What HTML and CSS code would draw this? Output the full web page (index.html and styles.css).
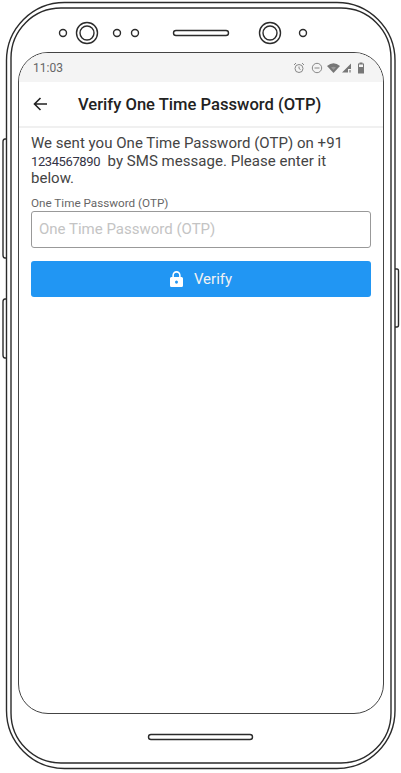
FILE: index.html
```html
<!DOCTYPE html>
<html lang="en">
  <head>
    <title>Verify OTP</title>
    <meta charset="utf-8">
    <link rel="stylesheet" href="styles.css">
  </head>
  <body>
    <div class="phone">
      <!-- device outline -->
      <svg class="frame" width="401" height="773" viewBox="0 0 401 773" fill="none" stroke="#2b2b2b" stroke-width="1.4">
        <rect x="6.500" y="2.500" width="388.500" height="766" rx="58"/>
        <rect x="11" y="8" width="380" height="755" rx="50"/>
        <path d="M6 139 H5 Q3 139 3 142 V255 Q3 258 5 258 H6"/>
        <path d="M6 299 H5 Q3 299 3 302 V355 Q3 358 5 358 H6"/>
        <path d="M395 269 H397 Q398.500 269 398.500 271 V325 Q398.500 327 397 327 H395"/>
        <circle cx="63" cy="33" r="3.500"/>
        <circle cx="87" cy="33" r="10.500"/>
        <circle cx="87" cy="33" r="7"/>
        <circle cx="117" cy="33" r="3.500"/>
        <circle cx="135" cy="33" r="3.500"/>
        <rect x="173.500" y="30.500" width="55" height="5" rx="2.500"/>
        <circle cx="270" cy="33" r="10.500"/>
        <circle cx="270" cy="33" r="7"/>
        <circle cx="303" cy="33" r="3.500"/>
        <rect x="148.500" y="734.500" width="104" height="5" rx="2.500"/>
      </svg>

      <div class="screen">
        <div class="statusbar">
          <span class="clock">11:03</span>
          <span class="status-icons">
            <svg width="12" height="12" viewBox="0 0 12 12" fill="none" stroke="#888">
              <circle cx="6" cy="6.500" r="4"/>
              <path d="M6 4.500V6.500L7.500 7.500M1 3L3 1M11 3L9 1"/>
            </svg>
            <svg class="gap-alarm" width="12" height="12" viewBox="0 0 12 12" fill="none" stroke="#888">
              <circle cx="6" cy="6" r="4.700"/>
              <path d="M3.500 6H8.500"/>
            </svg>
            <svg class="gap-wifi" width="13" height="12" viewBox="0 0 13 12" fill="#777">
              <path d="M0 4Q6.500 -1.500 13 4L6.500 11Z"/>
              <path d="M4 5.500Q6.500 4 9 5.500L6.500 8Z" fill="#999"/>
            </svg>
            <svg class="gap-signal" width="10" height="12" viewBox="0 0 10 12" fill="#777">
              <path d="M0 10.500L9 1.500V7H6V10.500Z"/>
              <path d="M7 8H9V10.500H7Z" opacity="0.600"/>
            </svg>
            <svg class="gap-batt" width="8" height="12" viewBox="0 0 8 12" fill="#777">
              <path d="M2.500 0.500H5.500V1.500H7V11.500H1V1.500H2.500Z"/>
              <path d="M2 2.500H6V5H2Z" fill="#f4f4f4"/>
            </svg>
          </span>
        </div>

        <div class="appbar">
          <svg class="back" width="14" height="14" viewBox="0 0 14 14" fill="none" stroke="#222" stroke-width="1.600">
            <path d="M14 7H1.500M7.500 1L1.500 7L7.500 13"/>
          </svg>
          <span class="appbar-title">Verify One Time Password (OTP)</span>
        </div>

        <div class="content">
          <p class="message">We sent you One Time Password (OTP) on +91 <span class="number">1234567890</span> &nbsp;by SMS message. Please enter it below.</p>
          <label class="field-label" for="otp">One Time Password (OTP)</label>
          <input class="field-input" id="otp" type="text" placeholder="One Time Password (OTP)">
          <button class="verify-btn" type="button">
            <svg width="13" height="16" viewBox="0 0 14 16" fill="#fff" preserveAspectRatio="none">
              <path d="M2.500 6V4.500A4.500 4.500 0 0 1 11.500 4.500V6H12.500Q14 6 14 7.500V14.500Q14 16 12.500 16H1.500Q0 16 0 14.500V7.500Q0 6 1.500 6ZM4.200 6H9.800V4.500A2.800 2.800 0 0 0 4.200 4.500ZM7 9.500A1.600 1.600 0 1 0 7 12.700A1.600 1.600 0 1 0 7 9.500Z" fill-rule="evenodd"/>
            </svg>
            Verify
          </button>
        </div>
      </div>
    </div>
  </body>
</html>
```

FILE: styles.css
```css
html, body {
  margin: 0;
  padding: 0;
  background: #fff;
}

.phone {
  position: relative;
  width: 401px;
  height: 773px;
  box-sizing: border-box;
  padding: 52px 17px 59px 18px;
  font-family: Roboto, sans-serif;
  overflow: hidden;
}

.frame {
  position: absolute;
  left: 0;
  top: 0;
}

.screen {
  position: relative;
  height: 100%;
  box-sizing: border-box;
  border: 1px solid #444;
  border-radius: 30px;
  overflow: hidden;
  display: flex;
  flex-direction: column;
}

.statusbar {
  height: 29px;
  background: #f4f4f4;
  display: flex;
  align-items: center;
  justify-content: space-between;
  padding: 0 18px 0 14px;
}

.clock {
  font-size: 12px;
  color: #666;
}

.status-icons {
  display: flex;
  align-items: center;
}

.gap-alarm {
  margin-left: 6px;
}

.gap-wifi {
  margin-left: 4px;
}

.gap-signal {
  margin-left: 2px;
}

.gap-batt {
  margin-left: 5px;
}

.appbar {
  height: 46px;
  box-sizing: border-box;
  display: flex;
  align-items: center;
  padding-left: 14px;
  border-bottom: 2px solid #f0f0f0;
}

.appbar-title {
  margin-left: 31px;
  font-size: 16.600px;
  font-weight: 500;
  color: #222;
}

.content {
  padding: 7px 12px 0 12px;
}

.message {
  margin: 0;
  font-size: 15px;
  line-height: 17.500px;
  letter-spacing: 0.030px;
  color: #444;
}

.number {
  font-size: 13px;
  letter-spacing: -0.400px;
  color: #334;
}

.field-label {
  display: block;
  margin-top: 7px;
  font-size: 11.700px;
  line-height: 16px;
  color: #666;
}

.field-input {
  display: block;
  width: 100%;
  height: 37px;
  box-sizing: border-box;
  margin: 0;
  padding: 0 7px;
  border: 1px solid #999;
  border-radius: 3px;
  font-family: Roboto, sans-serif;
  font-size: 15px;
  color: #444;
  background: #fff;
}

.field-input::placeholder {
  color: #c4c4c4;
  opacity: 1;
}

.verify-btn {
  display: flex;
  align-items: center;
  justify-content: center;
  gap: 11px;
  width: 100%;
  height: 36px;
  margin-top: 13px;
  padding: 0;
  border: 0;
  border-radius: 3px;
  background: #2196f3;
  color: #f2f2f2;
  font-family: Roboto, sans-serif;
  font-size: 15px;
}
```
